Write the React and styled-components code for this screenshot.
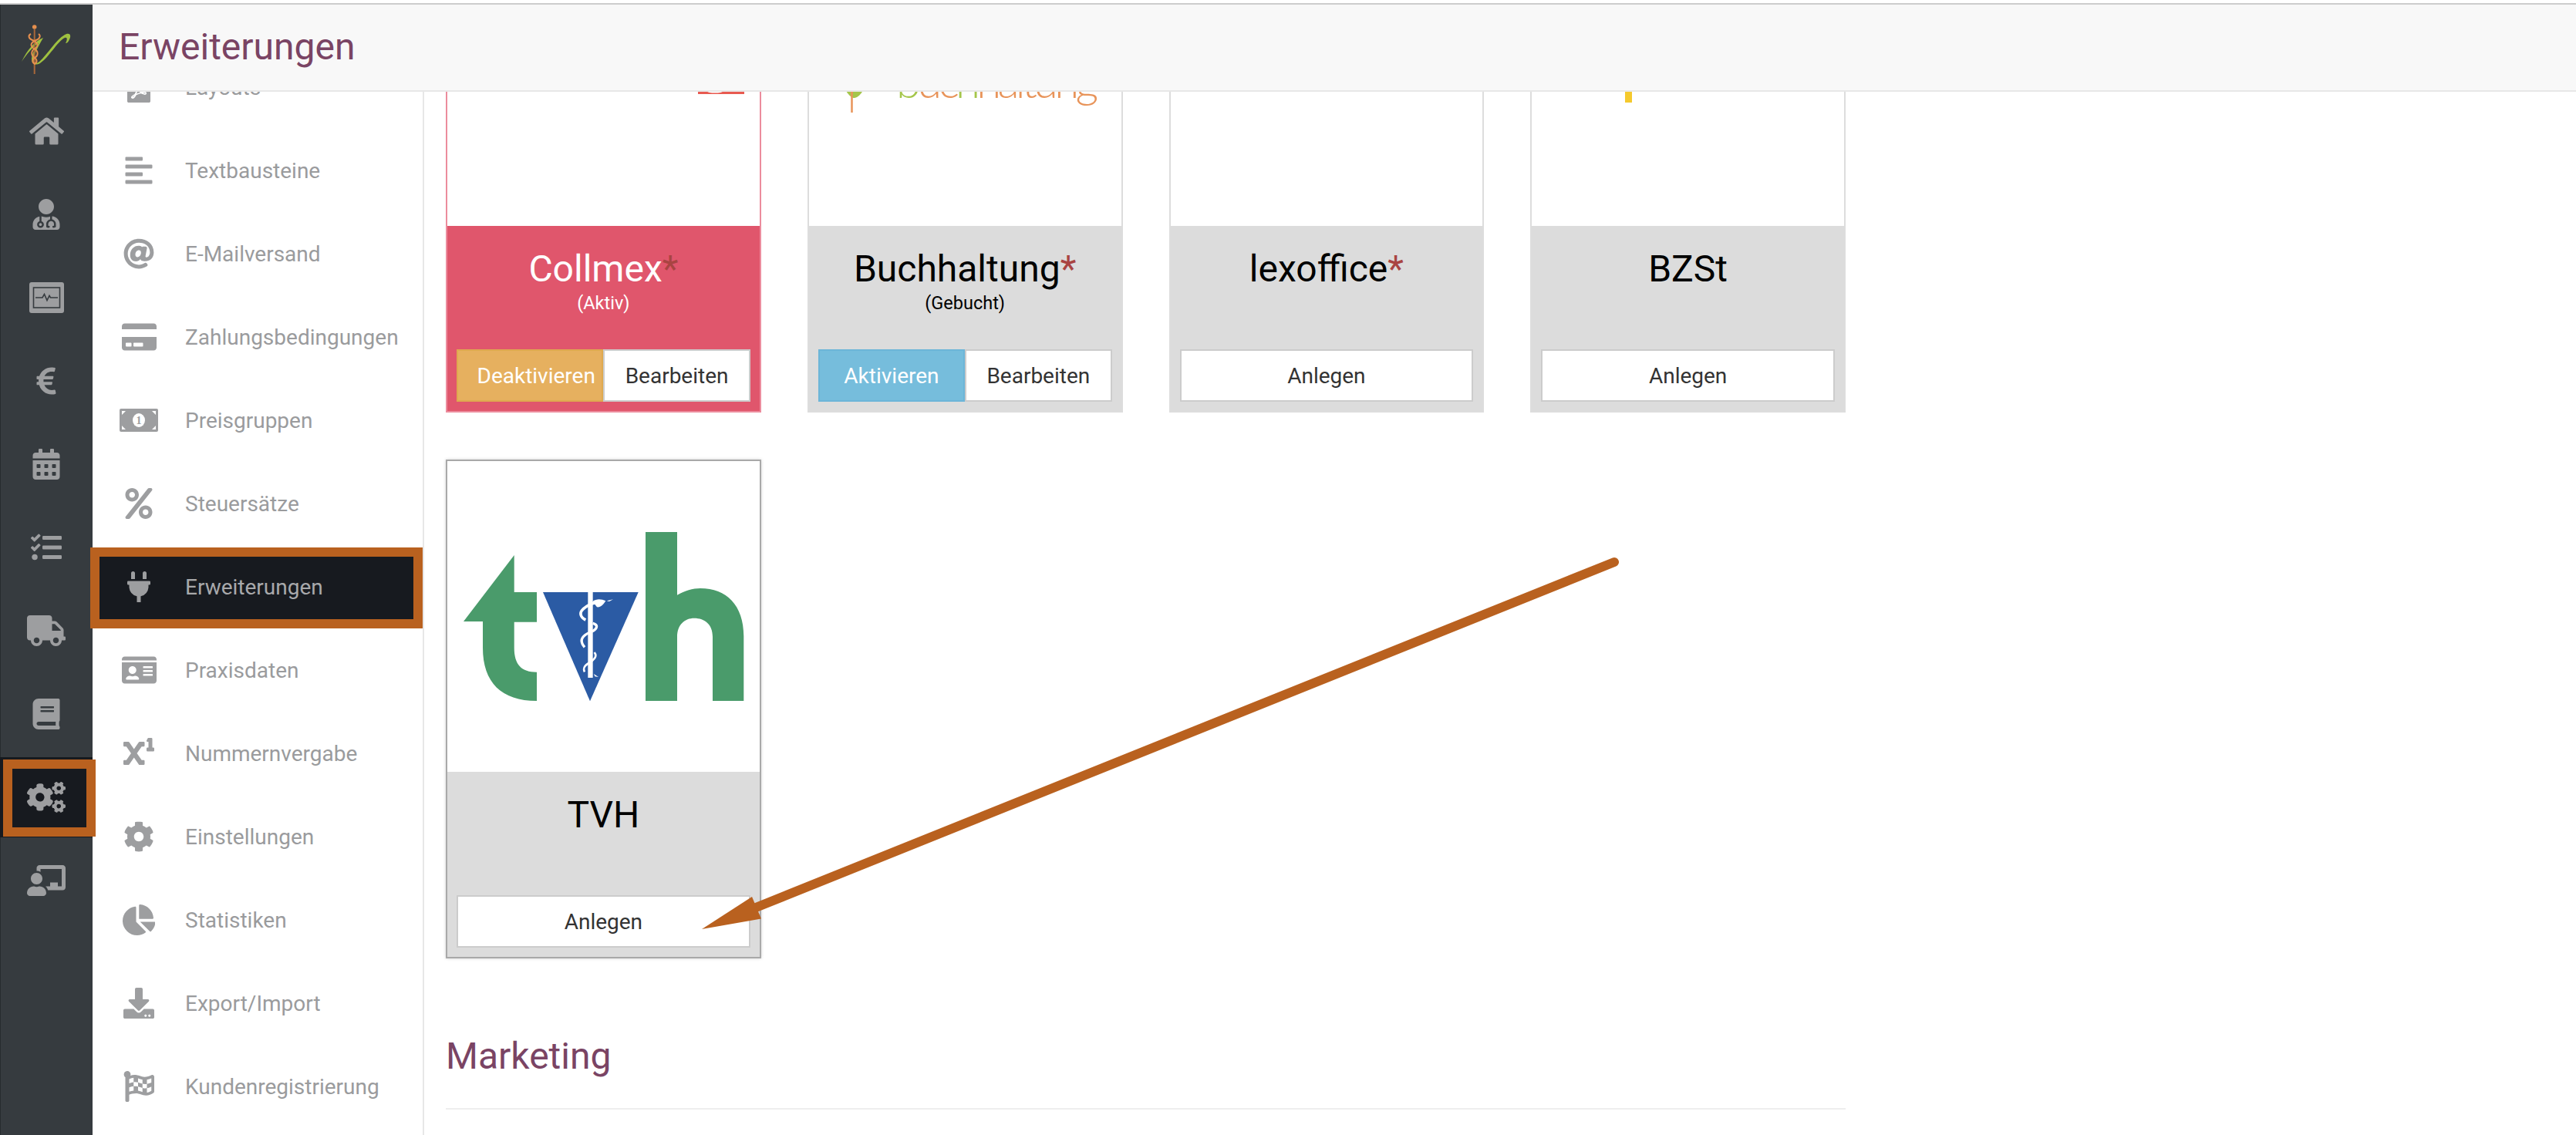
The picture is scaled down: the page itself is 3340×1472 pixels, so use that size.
import React from 'react'
import styled, { createGlobalStyle } from 'styled-components'
import {
  FaHome, FaUserMd, FaEuroSign, FaCalendarAlt, FaTasks, FaTruck, FaBook, FaCogs,
  FaChalkboardTeacher, FaFilePdf, FaAlignLeft, FaAt, FaCreditCard,
  FaPercent, FaPlug, FaIdCard, FaSuperscript, FaCog, FaChartPie, FaDownload, FaFlagCheckered,
} from 'react-icons/fa'

const Global = createGlobalStyle`
  html, body { margin: 0; padding: 0; background: #fff; }
  *, *::before, *::after { box-sizing: border-box; }
`

const Page = styled.div`
  position: relative;
  width: 3340px;
  height: 1472px;
  overflow: hidden;
  padding-top: 4px;
  display: flex;
  flex-direction: column;
  font-family: Roboto, "Liberation Sans", sans-serif;
  background: #fff;
`

const Shell = styled.div`
  flex: 1;
  min-height: 0;
  display: flex;
  border-top: 2px solid #cdcdcd;
`

const MainNav = styled.nav`
  width: 120px;
  flex: none;
  background: #363b3f;
  border-left: 1px solid #272b2e;
  display: flex;
  flex-direction: column;
`

const LogoBox = styled.div`
  height: 110px;
  flex: none;
  margin-left: -1px;
  padding: 24px 0 0 28px;
`

const MainItem = styled.div`
  position: relative;
  margin: ${p => (p.$active ? '2px 0' : '0')};
  margin-left: -1px;
  height: ${p => (p.$active ? '104px' : '108px')};
  display: flex;
  align-items: center;
  justify-content: center;
  color: #9d9ea0;
  background: ${p => (p.$active ? '#171a1f' : 'transparent')};

  /* react-icons squeeze wide glyphs into a 1em square, the real ones keep their width */
  svg { width: ${p => p.$w || 40}px; height: 40px; }

  ${p => p.$active && `
    &::after {
      content: '';
      position: absolute;
      left: 4px;
      top: 3px;
      width: 120px;
      height: 100px;
      border: 12px solid #b9611f;
      z-index: 2;
    }
  `}
`

const Right = styled.div`
  flex: 1;
  min-width: 0;
  display: flex;
  flex-direction: column;
`

const Header = styled.header`
  position: relative;
  z-index: 3;
  flex: none;
  height: 113px;
  padding: 0 0 2px 34px;
  display: flex;
  align-items: center;
  background: #f8f8f8;
  border-bottom: 2px solid #e7e7e7;
`

const Title = styled.h1`
  margin: 0;
  font-size: 48px;
  font-weight: 400;
  line-height: 56px;
  color: #7a4464;
`

const Body = styled.div`
  flex: 1;
  min-height: 0;
  display: flex;
`

const SubNav = styled.div`
  width: 430px;
  flex: none;
  border-right: 2px solid #e7e7e7;
`

const SubList = styled.div`
  margin-top: -60px;
`

const SubItem = styled.div`
  height: 108px;
  display: flex;
  align-items: center;
  font-size: 28px;
  color: #9a9b9d;
`

const ActiveSubItem = styled(SubItem)`
  position: relative;
  z-index: 2;
  width: 431px;
  height: 105px;
  margin: 3px 0 0 -3px;
  padding-bottom: 3px;
  border: 12px solid #b9611f;
  background: #171a1f;
  color: #a8a9ab;

  & > span:first-child {
    margin-left: -9px;
  }
`

const SubIcon = styled.span`
  width: 120px;
  flex: none;
  display: flex;
  justify-content: center;
  color: #9d9ea0;

  svg { width: ${p => p.$w || 40}px; height: 40px; }
`

const Content = styled.main`
  flex: 1;
  min-width: 0;
  padding-left: 28px;
  overflow: hidden;
`

const CardGrid = styled.div`
  margin-top: -231px;
  width: 1815px;
  display: grid;
  grid-template-columns: repeat(4, 408.75px);
  column-gap: 60px;
  row-gap: 61px;
`

const Card = styled.div`
  height: 647px;
  display: flex;
  flex-direction: column;
  border: 2px solid ${p => p.$border};
  box-shadow: ${p => (p.$raised ? '0 0 4px rgba(0, 0, 0, 0.18)' : 'none')};
`

const CardImage = styled.div`
  height: 403px;
  flex: none;
  background: #fff;

  svg { display: block; }
`

const CardFoot = styled.div`
  flex: 1;
  padding: 28px 12px 12px;
  display: flex;
  flex-direction: column;
  align-items: center;
  background: ${p => (p.$active ? '#e0566c' : '#dcdcdc')};
  color: ${p => (p.$active ? '#fff' : '#000')};
`

const CardName = styled.div`
  font-size: 48px;
  line-height: 56px;
  text-align: center;
`

const Star = styled.span`
  color: #a94442;
`

const CardNote = styled.div`
  font-size: 23.5px;
  line-height: 32px;
`

const ButtonRow = styled.div`
  margin-top: auto;
  width: 100%;
  height: 68px;
  display: flex;
`

const Button = styled.div`
  flex: 1 1 50%;
  min-width: 0;
  display: flex;
  align-items: center;
  justify-content: center;
  padding-left: ${p => p.$shift || 0}px;
  font-size: 28px;
  white-space: nowrap;
  color: ${p => p.$color || '#333'};
  background: ${p => p.$bg || '#fff'};
  border: 2px solid ${p => p.$edge || '#cccccc'};
`

const SectionTitle = styled.h2`
  margin: 99px 0 0;
  width: 1815px;
  padding-bottom: 39px;
  font-size: 48px;
  font-weight: 400;
  line-height: 56px;
  color: #7a4464;
  border-bottom: 2px solid #eeeeee;
`

const ArrowLayer = styled.svg`
  position: absolute;
  left: 0;
  top: 0;
  z-index: 4;
  pointer-events: none;
`

const mainIcons = [
  [FaHome, 45], [FaUserMd], [MonitorIcon, 45], [FaEuroSign], [FaCalendarAlt],
  [FaTasks], [FaTruck, 50], [FaBook], [FaCogs, 50], [FaChalkboardTeacher, 50],
]

const subItems = [
  ['Layouts', FaFilePdf],
  ['Textbausteine', FaAlignLeft],
  ['E-Mailversand', FaAt],
  ['Zahlungsbedingungen', FaCreditCard, 45],
  ['Preisgruppen', MoneyIcon, 50],
  ['Steuersätze', FaPercent],
  ['Erweiterungen', FaPlug, 40, true],
  ['Praxisdaten', FaIdCard, 45],
  ['Nummernvergabe', FaSuperscript],
  ['Einstellungen', FaCog],
  ['Statistiken', FaChartPie, 42.5],
  ['Export/Import', FaDownload],
  ['Kundenregistrierung', FaFlagCheckered],
]

function MonitorIcon() {
  return (
    <svg viewBox="0 0 45 40">
      <rect width="45" height="40" rx="3" fill="#9d9ea0" />
      <rect x="5.5" y="7" width="34" height="26" fill="none" stroke="#363b3f" strokeWidth="1.6" />
      <path d="M8 20h9l2.5-4.5 3.5 8 3-6 1.500 2.500H37" fill="none" stroke="#363b3f" strokeWidth="1.6" />
    </svg>
  )
}

// the FA money-bill in the package has no digit, this one has
function MoneyIcon() {
  return (
    <svg viewBox="0 0 50 40">
      <rect y="5" width="50" height="30" rx="2" fill="#9d9ea0" />
      <path d="M3 8h5l-5 5zM47 8h-5l5 5zM3 32h5l-5-5zM47 32h-5l5-5z" fill="#fff" />
      <ellipse cx="25" cy="20" rx="8" ry="9" fill="#fff" />
      <text x="25" y="25" textAnchor="middle" fontFamily="'Liberation Serif', serif" fontWeight="700" fontSize="14" fill="#9d9ea0">1</text>
    </svg>
  )
}

function AppLogo() {
  return (
    <svg width="64" height="66" viewBox="28 28 64 66">
      <path d="M28 78 C36 62 44 52 56 47 C52 54 47 62 44 72 C42 80 46 82 51 78 C62 68 72 50 84 43 C90 40 93 43 90 49 C89 52 87 54 85 54 C87 50 88 46 84 47 C74 52 64 72 52 80 C46 83 41 82 41 74 C42 66 46 60 50 54 C42 59 35 68 28 78 Z" fill="#9fc140" />
      <path d="M44.700 36 V94" stroke="#a9683a" strokeWidth="2" />
      <circle cx="44.700" cy="33" r="2.800" fill="#e58f4e" />
      <path d="M40 42 C36 44 37 48 42 50 C50 53 50 58 45 61 C40 64 40 70 45 73 C49 76 48 80 44 81 M50 42 C53 44 52 48 47 50 C39 53 39 58 44 61 C50 64 50 70 45 73 C41 76 42 80 46 81" fill="none" stroke="#e58f4e" strokeWidth="2" />
    </svg>
  )
}

// card logos use page coordinates in the viewBox, that way they can be measured straight off the screenshot
function CollmexLogo() {
  return (
    <svg width="405" height="403" viewBox="580 -110 405 403">
      <path d="M905 -20 H965 V122 H905 Z" fill="#e85a50" />
      <ellipse cx="927" cy="118.500" rx="10" ry="2" fill="#fff" />
    </svg>
  )
}

function BuchhaltungLogo() {
  return (
    <svg width="405" height="403" viewBox="1049 -110 405 403">
      <path d="M1093 110 C1098 122 1104 127 1107 127 C1112 127 1118 122 1122 110 Z" fill="#a5c64b" />
      <path d="M1098 110 L1104.500 122 L1111 110 Z" fill="#e8945a" />
      <path d="M1104.500 110 V146" stroke="#e8945a" strokeWidth="2.500" />
      <text x="1162" y="127" fontFamily="Lato, sans-serif" fontWeight="300" fontSize="58" textLength="262" fill="#e8945a">
        <tspan fill="#a5c64b">b</tspan>uc<tspan fill="#a5c64b">h</tspan>haltung
      </text>
    </svg>
  )
}

function BzstLogo() {
  return (
    <svg width="405" height="403" viewBox="1986 -110 405 403">
      <rect x="2107" y="60" width="9" height="73" fill="#f5c92d" />
    </svg>
  )
}

function TvhLogo() {
  return (
    <svg width="405" height="403" viewBox="580 598 405 403">
      <path d="M666.700 720 V768 H696 V806.700 H666.700 V840 C666.700 862 676 871.700 696 871.700 V909 C650 909 626 885 626 840 V806 H601 Z" fill="#4a9b6b" />
      <path d="M704 768 H827.700 L765 909.300 Z" fill="#2b5ba4" />
      <path d="M837 690 H878 V771.700 C888 766 898 763 908 763 C942 763 964.300 785 964.300 825 V909 H924 V826 C924 810 914 801.700 900 801.700 C888 801.700 878 810 878 826 V909 H837 Z" fill="#4a9b6b" />
      <g transform="translate(620 680) scale(0.3333)">
        <rect x="427" y="264" width="19" height="333" fill="#fff" />
        <path d="M474 306 C450 300 430 312 408 330 C392 345 398 362 418 372" fill="none" stroke="#fff" strokeWidth="11" />
        <path d="M446 385 C470 392 462 408 440 418 C410 430 388 448 414 478" fill="none" stroke="#fff" strokeWidth="10" />
        <path d="M452 498 C466 515 448 530 430 540 C410 552 408 562 414 574" fill="none" stroke="#fff" strokeWidth="8" />
        <path d="M445 300 C460 288 480 290 496 298 C488 312 474 325 462 322 Z" fill="#fff" />
        <path d="M500 298 L525 292 L510 300 Z M450 582 L468 594 L454 592 Z" fill="#fff" />
      </g>
    </svg>
  )
}

const cards = [
  { name: 'Collmex', star: true, note: '(Aktiv)', active: true, Logo: CollmexLogo, edge: '#ec8c9d',
    buttons: [{ label: 'Deaktivieren', bg: '#e6b05f', border: '#dfa94f', color: '#fff', shift: 16 }, { label: 'Bearbeiten' }] },
  { name: 'Buchhaltung', star: true, note: '(Gebucht)', Logo: BuchhaltungLogo, edge: '#dddddd',
    buttons: [{ label: 'Aktivieren', bg: '#76bddc', border: '#6cb5d8', color: '#fff' }, { label: 'Bearbeiten' }] },
  { name: 'lexoffice', star: true, edge: '#dddddd', buttons: [{ label: 'Anlegen' }] },
  { name: 'BZSt', Logo: BzstLogo, edge: '#dddddd', buttons: [{ label: 'Anlegen' }] },
  { name: 'TVH', Logo: TvhLogo, edge: '#a9a9a9', raised: true, buttons: [{ label: 'Anlegen' }] },
]

export default function App() {
  return (
    <Page>
      <Global />
      <Shell>
        <MainNav>
          <LogoBox><AppLogo /></LogoBox>
          {mainIcons.map(([Icon, w], i) => (
            <MainItem key={i} $w={w} $active={Icon === FaCogs}><Icon /></MainItem>
          ))}
        </MainNav>

        <Right>
          <Header><Title>Erweiterungen</Title></Header>
          <Body>
            <SubNav>
              <SubList>
                {subItems.map(([label, Icon, w, active]) => {
                  const Row = active ? ActiveSubItem : SubItem
                  return (
                    <Row key={label}>
                      <SubIcon $w={w}><Icon /></SubIcon>
                      <span>{label}</span>
                    </Row>
                  )
                })}
              </SubList>
            </SubNav>

            <Content>
              <CardGrid>
                {cards.map(c => (
                  <Card key={c.name} $border={c.edge} $raised={c.raised}>
                    <CardImage>{c.Logo && <c.Logo />}</CardImage>
                    <CardFoot $active={c.active}>
                      <CardName>{c.name}{c.star && <Star>*</Star>}</CardName>
                      {c.note && <CardNote>{c.note}</CardNote>}
                      <ButtonRow>
                        {c.buttons.map(b => (
                          <Button key={b.label} $bg={b.bg} $edge={b.border} $color={b.color} $shift={b.shift}>{b.label}</Button>
                        ))}
                      </ButtonRow>
                    </CardFoot>
                  </Card>
                ))}
              </CardGrid>
              <SectionTitle>Marketing</SectionTitle>
            </Content>
          </Body>
        </Right>
      </Shell>

      {/* screenshot annotation */}
      <ArrowLayer width="3340" height="1472" viewBox="0 0 3340 1472">
        <path d="M2093 729 L980 1177" stroke="#b9611f" strokeWidth="12" strokeLinecap="round" />
        <path d="M910 1205 L975 1163 L987 1191.500 Z" fill="#b9611f" />
      </ArrowLayer>
    </Page>
  )
}
